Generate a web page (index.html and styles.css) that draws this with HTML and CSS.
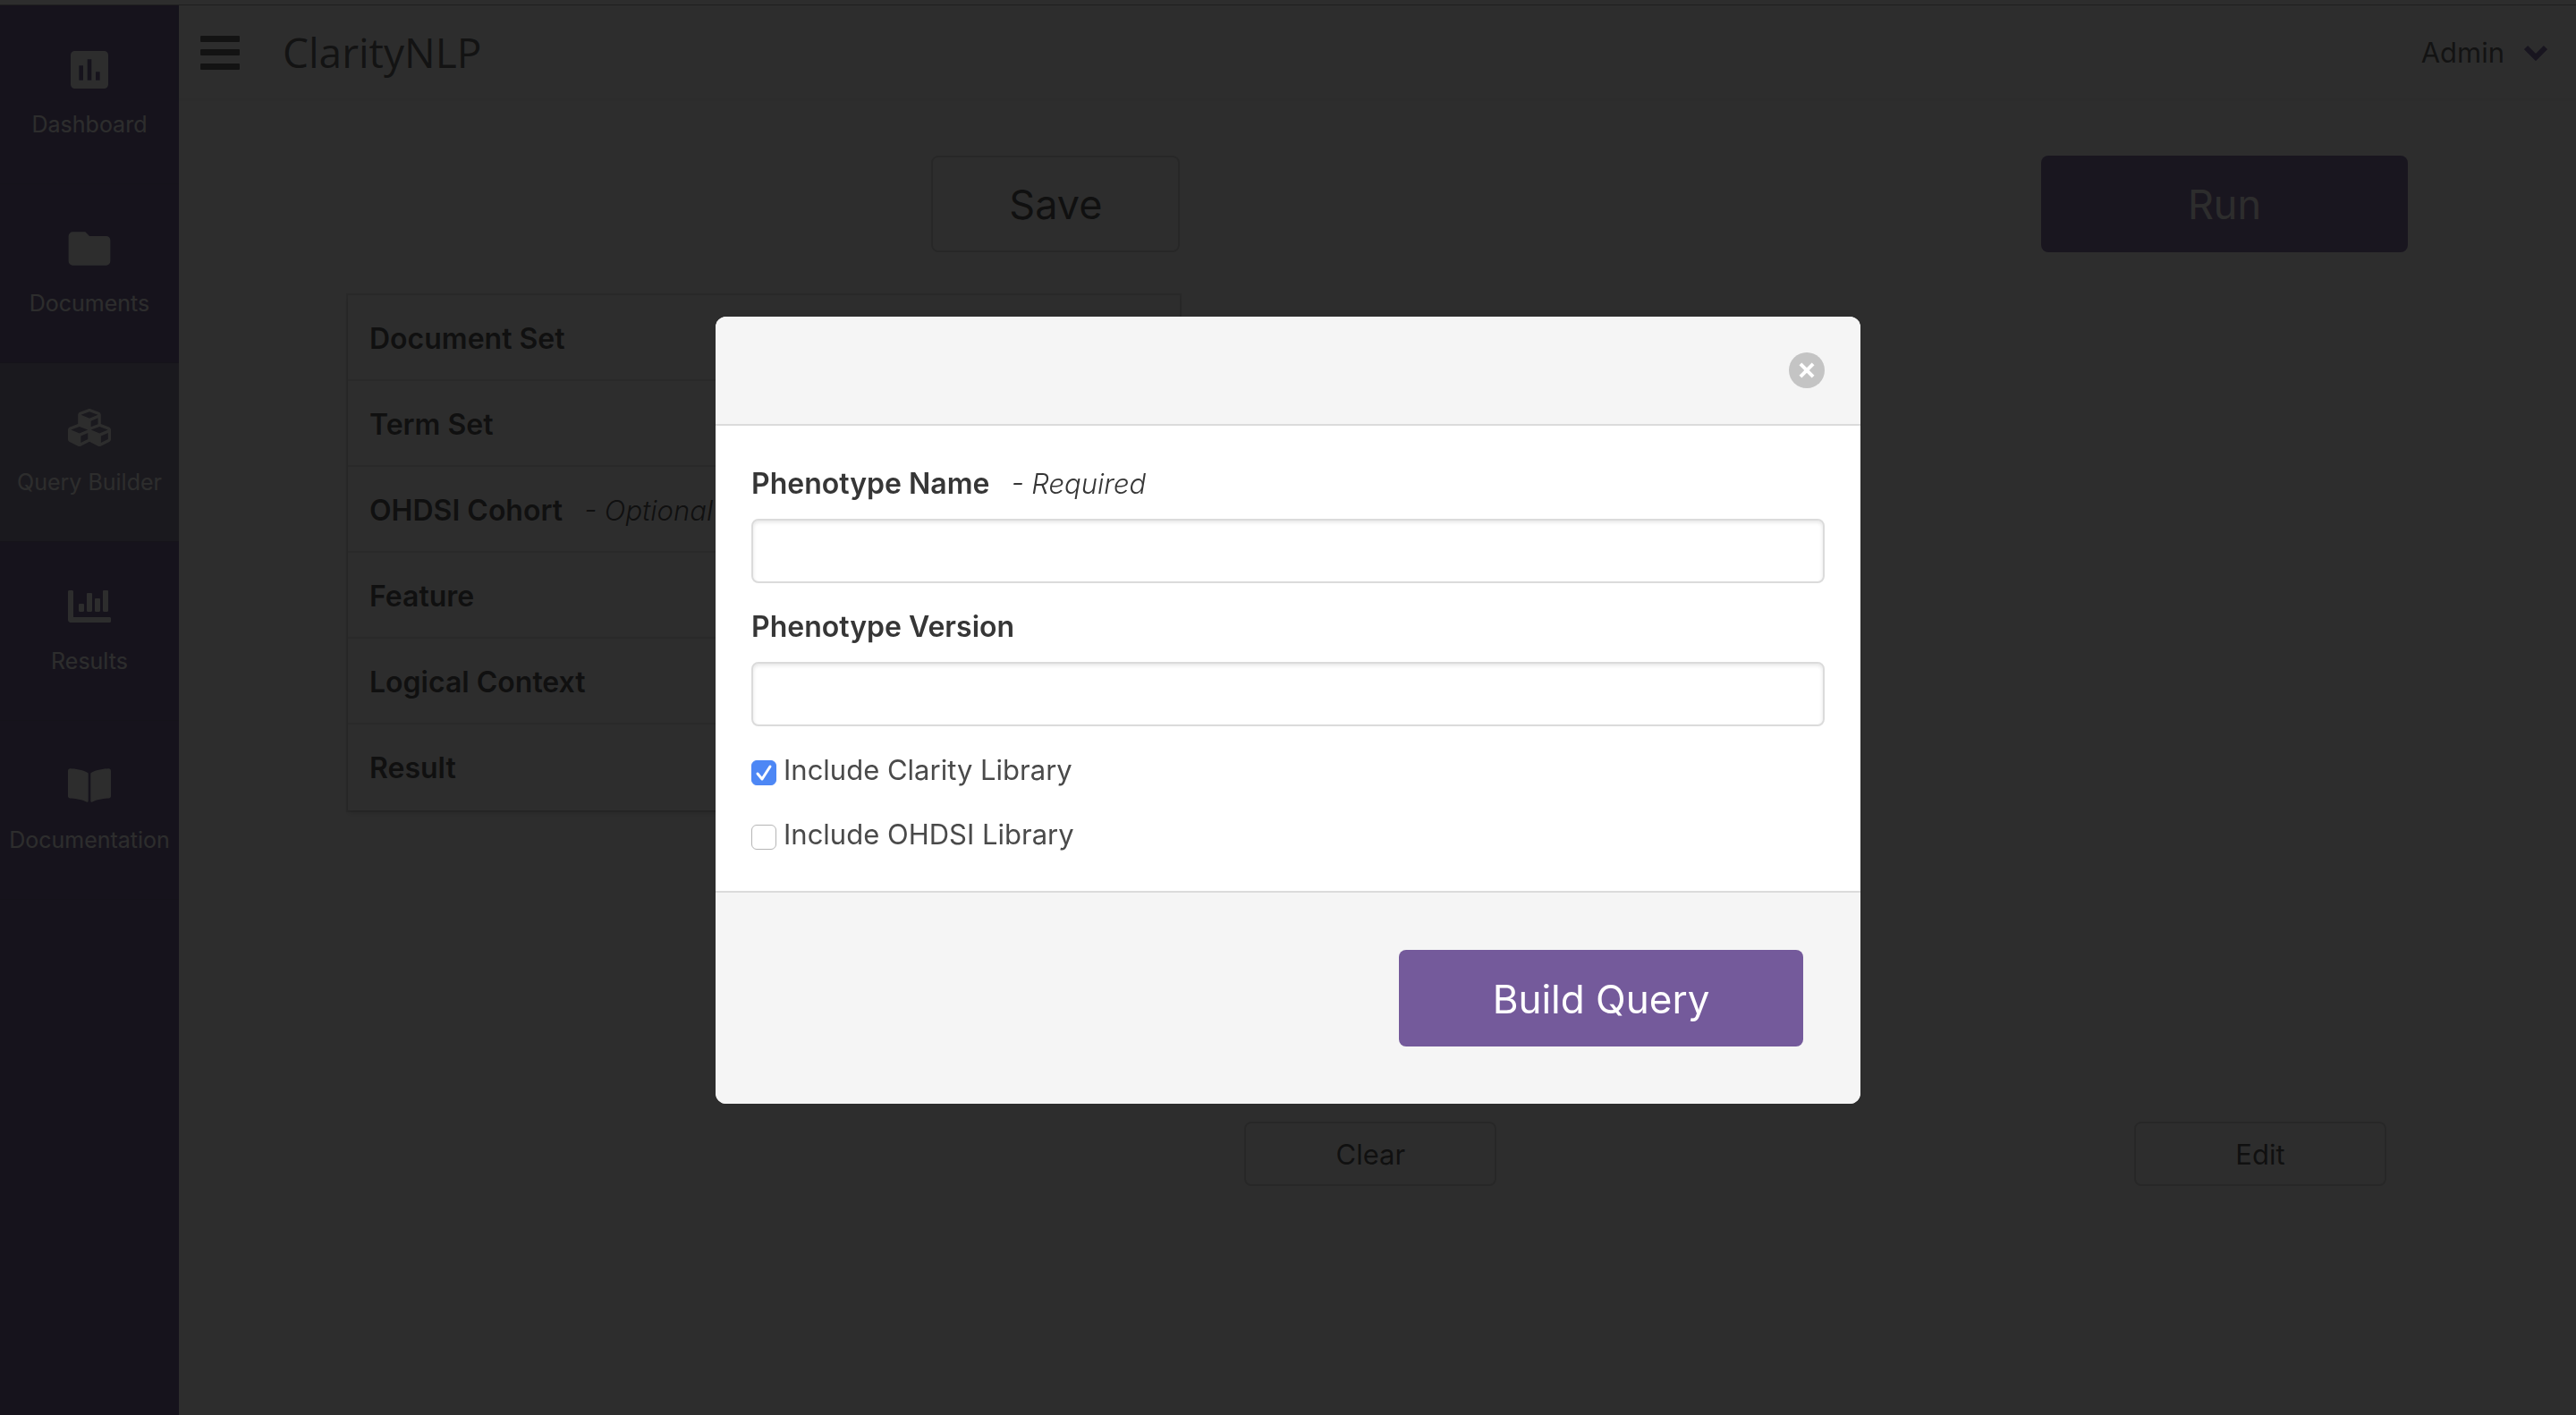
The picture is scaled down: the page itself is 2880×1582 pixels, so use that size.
FILE: index.html
```html
<!DOCTYPE html>
<html lang="en">
<head>
<meta charset="utf-8">
<title>ClarityNLP</title>
<link rel="stylesheet" href="styles.css">
</head>
<body>
<div class="app">
  <nav class="sidebar" aria-label="Main">
    <a class="side-link" href="#dashboard">
      <svg class="side-icon" viewBox="0 0 24 24" aria-hidden="true"><path d="M19 3H5a2 2 0 0 0-2 2v14a2 2 0 0 0 2 2h14a2 2 0 0 0 2-2V5a2 2 0 0 0-2-2zM9 17H7v-7h2v7zm4 0h-2V7h2v10zm4 0h-2v-4h2v4z"/></svg>
      <span>Dashboard</span>
    </a>
    <a class="side-link" href="#documents">
      <svg class="side-icon" viewBox="0 0 24 24" aria-hidden="true"><path d="M10 4H4a2 2 0 0 0-2 2v12a2 2 0 0 0 2 2h16a2 2 0 0 0 2-2V8a2 2 0 0 0-2-2h-8l-2-2z"/></svg>
      <span>Documents</span>
    </a>
    <a class="side-link is-active" href="#query-builder">
      <svg class="side-icon is-inset" viewBox="0 0 512 512" aria-hidden="true"><path d="M488.600 250.200L392 214V105.500c0-15-9.300-28.400-23.400-33.700l-100-37.500c-8.100-3.100-17.100-3.100-25.300 0l-100 37.500c-14.100 5.300-23.400 18.700-23.400 33.700V214l-96.600 36.200C9.300 255.500 0 268.900 0 283.900V394c0 13.600 7.700 26.100 19.900 32.200l100 50c10.100 5.100 22.100 5.100 32.200 0l103.900-52 103.900 52c10.100 5.100 22.100 5.100 32.200 0l100-50c12.200-6.100 19.900-18.600 19.900-32.200V283.900c0-15-9.300-28.400-23.400-33.700zM358 214.800l-85 31.900v-68.200l85-37v73.300zM154 104.100l102-38.200 102 38.200v.6l-102 41.400-102-41.400v-.6zm84 291.100l-85 42.500v-79.100l85-38.800v75.400zm0-112l-102 41.400-102-41.400v-.6l102-38.200 102 38.200v.6zm240 112l-85 42.500v-79.100l85-38.800v75.400zm0-112l-102 41.400-102-41.400v-.6l102-38.200 102 38.200v.6z"/></svg>
      <span>Query Builder</span>
    </a>
    <a class="side-link" href="#results">
      <svg class="side-icon is-inset" viewBox="0 0 512 512" aria-hidden="true"><path d="M332.800 320h38.400c6.400 0 12.800-6.400 12.800-12.800V172.800c0-6.400-6.400-12.800-12.800-12.800h-38.400c-6.400 0-12.800 6.400-12.800 12.800v134.400c0 6.400 6.400 12.800 12.800 12.800zm96 0h38.400c6.400 0 12.800-6.400 12.800-12.800V76.800c0-6.400-6.400-12.800-12.800-12.800h-38.400c-6.400 0-12.800 6.400-12.800 12.800v230.400c0 6.400 6.400 12.800 12.800 12.800zm-288 0h38.400c6.400 0 12.800-6.400 12.800-12.800v-70.400c0-6.400-6.400-12.800-12.800-12.800h-38.400c-6.400 0-12.800 6.400-12.800 12.800v70.400c0 6.400 6.400 12.800 12.800 12.800zm96 0h38.400c6.400 0 12.800-6.400 12.800-12.800V108.800c0-6.400-6.400-12.800-12.800-12.800h-38.400c-6.400 0-12.800 6.400-12.800 12.800v198.400c0 6.400 6.400 12.800 12.800 12.800zM496 384H64V80c0-8.840-7.160-16-16-16H16C7.160 64 0 71.160 0 80v336c0 17.670 14.330 32 32 32h464c8.840 0 16-7.160 16-16v-32c0-8.840-7.160-16-16-16z"/></svg>
      <span>Results</span>
    </a>
    <a class="side-link" href="#documentation">
      <svg class="side-icon is-inset" viewBox="0 0 576 512" aria-hidden="true"><path d="M542.220 32.050c-54.800 3.110-163.720 14.430-230.960 55.590-4.640 2.840-7.270 7.890-7.270 13.170v363.870c0 11.550 12.630 18.850 23.280 13.490 69.180-34.820 169.230-44.320 218.700-46.920 16.890-.89 30.020-14.430 30.020-30.660V62.750c.010-17.710-15.350-31.740-33.770-30.700zM264.730 87.640C197.500 46.480 88.580 35.170 33.780 32.050 15.360 31.010 0 45.040 0 62.750V400.600c0 16.240 13.130 29.780 30.020 30.660 49.490 2.600 149.590 12.110 218.770 46.950 10.620 5.350 23.210-1.940 23.210-13.460V100.630c0-5.290-2.620-10.140-7.270-12.990z"/></svg>
      <span>Documentation</span>
    </a>
  </nav>

  <div class="content">
    <header class="topbar">
      <button class="menu-button" type="button" aria-label="Menu">
        <svg class="menu-icon" viewBox="0 0 44 38" aria-hidden="true"><path d="M1 0h42a1 1 0 0 1 1 1v5a1 1 0 0 1-1 1H1a1 1 0 0 1-1-1V1a1 1 0 0 1 1-1zM1 15h42a1 1 0 0 1 1 1v5a1 1 0 0 1-1 1H1a1 1 0 0 1-1-1v-5a1 1 0 0 1 1-1zM1 31h42a1 1 0 0 1 1 1v5a1 1 0 0 1-1 1H1a1 1 0 0 1-1-1v-5a1 1 0 0 1 1-1z"/></svg>
      </button>
      <a class="brand" href="#home">ClarityNLP</a>
      <button class="account" type="button">
        <span>Admin</span>
        <svg class="chevron" viewBox="0 0 26 18" aria-hidden="true"><path d="M2 3l11 11L24 3"/></svg>
      </button>
    </header>

    <main class="builder">
      <section class="column is-narrow">
        <div class="actions"><button class="button is-large is-save" type="button">Save</button></div>
        <ul class="card">
          <li>Document Set</li>
          <li>Term Set</li>
          <li>OHDSI Cohort <em>- Optional</em></li>
          <li>Feature</li>
          <li>Logical Context</li>
          <li>Result</li>
        </ul>
      </section>
      <section class="column is-wide">
        <div class="actions"><button class="button is-large is-primary is-run" type="button">Run</button></div>
        <div class="editor"></div>
        <div class="tools">
          <button class="button is-small" type="button">Clear</button>
          <button class="button is-small" type="button">Edit</button>
        </div>
      </section>
    </main>
  </div>
</div>

<div class="modal">
  <form class="dialog" role="dialog" aria-modal="true" aria-label="Build query">
    <header class="dialog-head">
      <button class="close" type="button" aria-label="Close"></button>
    </header>
    <div class="dialog-body">
      <label class="label" for="name">Phenotype Name <em>- Required</em></label>
      <input class="input" id="name" type="text">
      <label class="label" for="version">Phenotype Version</label>
      <input class="input" id="version" type="text">
      <label class="check"><input type="checkbox" checked>Include Clarity Library</label>
      <label class="check"><input type="checkbox">Include OHDSI Library</label>
    </div>
    <footer class="dialog-foot">
      <button class="button is-large is-primary is-build" type="button">Build Query</button>
    </footer>
  </form>
</div>
</body>
</html>
```
FILE: styles.css
```css
* {
  box-sizing: border-box;
}

body {
  margin: 0;
  background: #fff;
  color: #4a4a4a;
  font-family: Inter, "Liberation Sans", sans-serif;
  font-size: 31px;
  line-height: 48px;
}

button,
input {
  font: inherit;
  color: inherit;
}

a {
  color: inherit;
  text-decoration: none;
}

em {
  margin-left: 16px;
  font-size: 31px;
  font-weight: 300;
}

.app {
  display: flex;
  min-height: 100vh;
  padding-top: 6px;
}

.app::before {
  content: "";
  position: absolute;
  top: 5px;
  left: 0;
  right: 0;
  height: 1px;
  background: #999;
}

/* Sidebar */
.sidebar {
  flex: 0 0 200px;
  background: #5a4b86;
  color: #fff;
}

.side-link {
  display: flex;
  flex-direction: column;
  align-items: center;
  height: 200px;
  padding-top: 44px;
  gap: 9px;
  font-size: 25px;
  border-bottom: 1px solid #54467c;
  white-space: nowrap;
}

.side-link.is-active {
  background: #786f92;
}

.side-icon {
  width: 56px;
  height: 56px;
  fill: currentColor;
}

.side-icon.is-inset {
  padding: 4px;
}

/* Top bar */
.content {
  flex: 1;
  min-width: 0;
}

.topbar {
  display: flex;
  align-items: center;
  height: 104px;
  padding: 0 32px 0 24px;
  box-shadow: 0 2px 4px rgba(0, 0, 0, 0.08);
}

.menu-button,
.account {
  display: flex;
  align-items: center;
  padding: 2px 0 0;
  border: 0;
  background: none;
}

.menu-icon {
  width: 44px;
  height: 38px;
  fill: currentColor;
}

.brand {
  margin-left: 48px;
  font-family: "Open Sans", sans-serif;
  font-size: 46px;
}

.account {
  margin-left: auto;
  gap: 22px;
}

.chevron {
  width: 26px;
  height: 18px;
  fill: none;
  stroke: #6a559b;
  stroke-width: 6;
}

/* Builder */
.builder {
  display: flex;
  padding: 64px 164px 0 163px;
}

.column {
  min-width: 0;
  padding: 0 24px;
}

.is-narrow {
  flex: 0 0 calc(100% * 5 / 12);
}

.is-wide {
  flex: 0 0 calc(100% * 7 / 12);
}

.actions {
  display: flex;
  justify-content: flex-end;
}

.button {
  border: 2px solid #d2d2d2;
  border-radius: 8px;
  background: #fff;
  color: #363636;
  padding: 2px 0 0;
}

.button.is-large {
  height: 108px;
  font-size: 45px;
}

.button.is-small {
  width: 282px;
  height: 72px;
}

.button.is-primary {
  border: 0;
  background: #745a9b;
  color: #fff;
}

.is-save {
  width: 278px;
}

.is-run {
  width: 410px;
}

.is-build {
  width: 452px;
}

.button.is-build {
  font-size: 44px;
}

.card {
  margin: 48px 0 0 2px;
  padding: 0;
  list-style: none;
  color: #363636;
  font-size: 32px;
  font-weight: 600;
  box-shadow: 0 4px 6px rgba(10, 10, 10, 0.14), 0 0 0 2px rgba(10, 10, 10, 0.14);
}

.card li {
  height: 96px;
  padding: 25px 24px 23px;
}

.card li + li {
  box-shadow: 0 -2px 0 #e4e4e4;
}

.editor {
  height: 900px;
  margin-top: 48px;
  background: #fafafa;
}

.tools {
  display: flex;
  justify-content: space-between;
  padding: 24px;
}

/* Dialog */
.modal {
  position: fixed;
  inset: 0;
  display: flex;
  align-items: center;
  justify-content: center;
  background: rgba(10, 10, 10, 0.86);
}

.dialog {
  width: 1280px;
  margin-top: 6px;
  overflow: hidden;
  border-radius: 12px;
  background: #fff;
}

.dialog-head {
  display: flex;
  justify-content: flex-end;
  padding: 40px;
  background: #f5f5f5;
  border-bottom: 2px solid #dbdbdb;
}

.close {
  position: relative;
  width: 40px;
  height: 40px;
  border: 0;
  border-radius: 50%;
  background: #c4c4c4;
}

.close::before,
.close::after {
  content: "";
  position: absolute;
  top: 18px;
  left: 10px;
  width: 20px;
  height: 4px;
  background: #fff;
  transform: rotate(45deg);
}

.close::after {
  transform: rotate(-45deg);
}

.dialog-body {
  padding: 41px 40px 39px;
}

.label {
  display: block;
  margin-bottom: 15px;
  color: #363636;
  font-size: 32px;
  font-weight: 600;
}

.input {
  display: block;
  width: 100%;
  height: 72px;
  margin-bottom: 25px;
  padding: 0 20px;
  border: 2px solid #dbdbdb;
  border-radius: 8px;
  background: #fff;
  box-shadow: inset 0 2px 4px rgba(10, 10, 10, 0.1);
}

.check {
  display: flex;
  align-items: center;
  gap: 8px;
}

.check + .check {
  margin-top: 24px;
}

.check input {
  appearance: none;
  width: 28px;
  height: 28px;
  margin: 6px 0 0;
  border: 1px solid #b5b5b5;
  border-radius: 6px;
  background: #fff;
}

.check input:checked {
  border-color: #4d87f5;
  background: #4d87f5 url("data:image/svg+xml,%3Csvg xmlns='http://www.w3.org/2000/svg' viewBox='0 0 28 28'%3E%3Cpath d='M7 15l5 6 9-14' fill='none' stroke='white' stroke-width='3' stroke-linecap='round' stroke-linejoin='round'/%3E%3C/svg%3E") center / 28px no-repeat;
}

.dialog-foot {
  display: flex;
  justify-content: flex-end;
  padding: 64px;
  background: #f5f5f5;
  border-top: 2px solid #dbdbdb;
}
```
